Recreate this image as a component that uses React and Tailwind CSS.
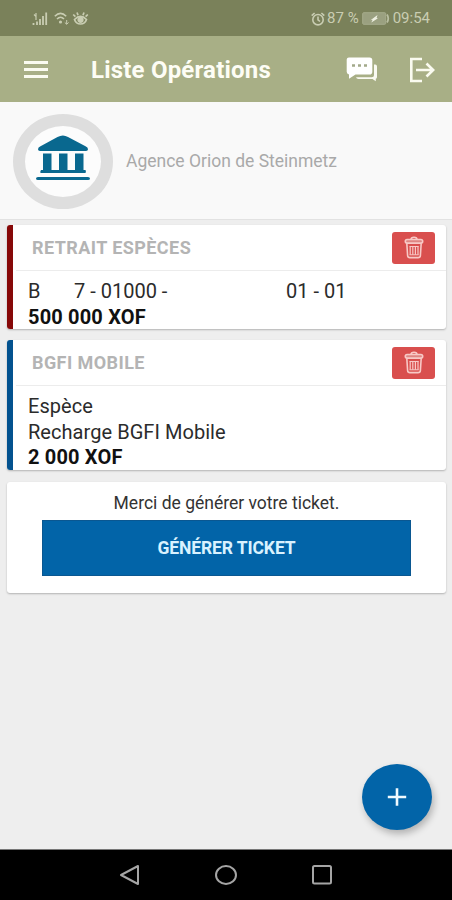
import React, { useState } from 'react';

const initialOperations = [
  {
    id: 1,
    title: 'RETRAIT ESPÈCES',
    stripe: 'bg-[#860808]',
    height: 'h-[104px]',
    account: true,
    lines: [],
    amount: '500 000 XOF',
  },
  {
    id: 2,
    title: 'BGFI MOBILE',
    stripe: 'bg-[#03528f]',
    height: 'h-[130px]',
    account: false,
    lines: ['Espèce', 'Recharge BGFI Mobile'],
    amount: '2 000 XOF',
  },
];

const SignalIcon = () => (
  <svg width="16" height="14" viewBox="0 0 16 14" fill="none" stroke="currentColor" strokeWidth="1.8">
    <path d="M1.5 13v-2M5 13V9.5M8 13V7M11 13V4M14.2 13V0.5" />
    <path d="M2 2.5l2 2M4 1v7" strokeWidth="1.2" />
  </svg>
);

const WifiIcon = () => (
  <svg width="15" height="13" viewBox="0 0 15 13" fill="none" stroke="currentColor" strokeWidth="1.6">
    <path d="M0.8 4.2Q6.5 -1.5 12.2 4.2M3 7Q6.5 3.5 10 7" />
    <circle cx="6.5" cy="10" r="1.6" fill="currentColor" stroke="none" />
    <path d="M12.7 8v4M10.8 10.5l1.9 1.8 1.9-1.8" strokeWidth="1" />
  </svg>
);

const EyeIcon = () => (
  <svg width="17" height="15" viewBox="0 0 17 15" fill="none" stroke="currentColor" strokeWidth="1.7">
    <path d="M2.5 8.5Q8.5 2.5 14.5 8.5Q13 13 8.5 13Q4 13 2.5 8.5zM1.2 3.5l2.2 2.2M5 1.5l1 2.8M12 1.5L11 4.3M15.8 3.5l-2.2 2.2" />
    <circle cx="8.5" cy="8.8" r="2.3" fill="currentColor" />
  </svg>
);

const AlarmIcon = () => (
  <svg width="14" height="14" viewBox="0 0 14 14" fill="none" stroke="currentColor" strokeWidth="1.6">
    <circle cx="7" cy="7.7" r="5.2" />
    <path d="M7 4.6v3.2l2 1.7M0.7 3.6L3.6 1M13.3 3.6L10.4 1" />
  </svg>
);

const BatteryIcon = () => (
  <svg width="28" height="13" viewBox="0 0 28 13" fill="none">
    <rect x="0.7" y="0.7" width="23" height="11.6" rx="1" fill="#9aa080" stroke="#a6ac8c" />
    <path d="M25 2.5Q27.5 6.5 25 10.5" stroke="#b9bfa2" strokeWidth="1.8" />
    <path d="M8.500 8.200L15.500 3L14.600 6L16 6.200L9.300 10.500L10.600 7.800z" fill="#eef0e0" />
  </svg>
);

const ChatIcon = () => (
  <svg width="32" height="25" viewBox="0 0 32 25">
    <path d="M28 7.5h1.2A2 2 0 0 1 31 9.5V20q0 1.5-1.2 1.800V24.300L26.500 22H12.500q-2 0-2.500-1.700H25.500q2.500 0 2.500-2.500z" fill="#fbfbf3" />
    <path d="M3 0.500H23.500a2.800 2.800 0 0 1 2.800 2.800V14.700a2.800 2.800 0 0 1-2.800 2.800H9.500L3 21.800V17.400Q0.700 17 0.700 14.700V3.300A2.600 2.600 0 0 1 3 0.500z" fill="#fff" />
    <path d="M6 7.200h3v2.600h-3zM12 7.200h3v2.600h-3zM18 7.200h3v2.600h-3z" fill="#a3a98a" />
  </svg>
);

const LogoutIcon = () => (
  <svg width="26" height="26" viewBox="0 0 26 26" fill="none" stroke="#fafbf0" strokeWidth="2.600">
    <path d="M13 2H2.300V24H13" />
    <path d="M7 13H24M17.500 6.500L24.200 13L17.500 19.500" />
  </svg>
);

const BankIcon = () => (
  <svg className="mb-[6px]" width="54" height="46" viewBox="0 0 54 46" fill="#09688f">
    <path d="M2 14.200Q2 12 4.500 11.200L21.500 2Q27 -1 32 2L49.500 11.200Q52 12 52 14.200Q52 16 50 16H4Q2 16 2 14.200z" />
    <path d="M7 18.500H15.500V35H7zM23 18.500H31.500V35H23zM39 18.500H47.500V35H39z" />
    <path d="M5 35H49.500Q50.500 38 49 38H5Q3.500 38 5 35zM2 42H52Q54 42 54 43.500Q54 45 52 45H2Q0 45 0 43.500Q0 42 2 42z" />
  </svg>
);

const TrashIcon = () => (
  <svg width="20" height="23" viewBox="0 0 20 23" fill="none" stroke="#f8c9c6" strokeWidth="1.600">
    <path d="M7 3.500Q7 1.200 10 1.200Q13 1.200 13 3.500" />
    <rect x="1.300" y="3.500" width="17.400" height="3.600" rx="1.800" fill="#df8582" />
    <path d="M2.800 7.200L3.600 19.500Q3.700 21.600 6 21.600H14Q16.300 21.600 16.400 19.500L17.200 7.200" />
    <path d="M6.200 10.500V18.800M8.800 10.500V18.800M11.400 10.500V18.800M14 10.500V18.800" strokeWidth="1.200" />
    <path d="M5.500 10.500H14.700M5.500 18.800H14.700" strokeWidth="1" />
  </svg>
);

function OperationCard({ operation, onDelete }) {
  return (
    <div className={`flex overflow-hidden rounded-[3px] bg-white shadow-[0_1px_2px_rgba(0,0,0,0.25)] ${operation.height}`}>
      <div className={`w-[6px] shrink-0 ${operation.stripe}`} />
      <div className="flex-1">
        <div className="ml-[3px] flex h-[46px] items-center justify-between border-b border-[#ececec] pr-[11px] pl-4">
          <h2 className="text-[18px] font-bold tracking-[0.43px] text-[#b4b4b4]">{operation.title}</h2>
          <button
            onClick={() => onDelete(operation.id)}
            className="flex h-8 w-[43px] items-center justify-center rounded-[3px] bg-[#d94f4e]"
          >
            <TrashIcon />
          </button>
        </div>
        <div className="pt-2 pl-[15px] text-[20px] leading-[25.7px] text-[#2b2b2b]">
          {operation.account && (
            <div className="flex whitespace-nowrap">
              <span className="w-[46px]">B</span>
              <span className="w-[212px]">7 - 01000 -</span>
              <span>01 - 01</span>
            </div>
          )}
          {operation.lines.map((line) => (
            <p key={line} className="tracking-[0.05px]">{line}</p>
          ))}
          <p className="font-bold tracking-[0.17px] text-[#111]">{operation.amount}</p>
        </div>
      </div>
    </div>
  );
}

export default function App() {
  const [operations, setOperations] = useState(initialOperations);

  const handleDelete = (id) => {
    setOperations(operations.filter((operation) => operation.id !== id));
  };

  return (
    <div className="relative flex h-[900px] w-[452px] flex-col overflow-hidden bg-[#eeeeee] font-[Roboto,sans-serif]">
      {/* Status bar */}
      <div className="flex h-9 shrink-0 items-center justify-between bg-[#7a815a] pt-px pr-[22px] pl-8 text-[#c9cdb2]">
        <div className="flex items-center gap-[6px]">
          <SignalIcon />
          <div className="flex items-center gap-[3px]">
            <WifiIcon />
            <EyeIcon />
          </div>
        </div>
        <div className="flex items-center text-[15px] whitespace-nowrap">
          <AlarmIcon />
          <span className="mr-[3px] ml-[2px]">87 %</span>
          <BatteryIcon />
          <span className="ml-[3px]">09:54</span>
        </div>
      </div>

      {/* Header */}
      <header className="flex h-[66px] shrink-0 items-center bg-[#a8af86] pt-px pr-[17px] pl-6">
        <button className="flex w-6 flex-col gap-1">
          <span className="h-[3px] w-full bg-[#fafbf0]" />
          <span className="h-[3px] w-full bg-[#fafbf0]" />
          <span className="h-[3px] w-full bg-[#fafbf0]" />
        </button>
        <h1 className="ml-[43px] flex-1 text-[24px] font-bold tracking-[0.2px] whitespace-nowrap text-[#fdfdf5]">
          Liste Opérations
        </h1>
        <button className="mr-[31px]">
          <ChatIcon />
        </button>
        <button>
          <LogoutIcon />
        </button>
      </header>

      {/* Agency */}
      <div className="flex h-[118px] shrink-0 items-center border-b border-[#e2e2e2] bg-[#f9f9f9] pt-px pl-[13px]">
        <div className="flex h-[95px] w-[100px] items-center justify-center rounded-[50%] border-[12px] border-[#dedede] bg-[#fcfcfc]">
          <BankIcon />
        </div>
        <span className="ml-[13px] text-[17.5px] text-[#a9a9a9]">Agence Orion de Steinmetz</span>
      </div>

      {/* Operations */}
      <main className="flex flex-1 flex-col gap-[11px] pt-[5px] pr-[6px] pl-[7px]">
        {operations.map((operation) => (
          <OperationCard key={operation.id} operation={operation} onDelete={handleDelete} />
        ))}
        <div className="mt-px flex h-[111px] flex-col items-center rounded-[3px] bg-white pt-[9px] shadow-[0_1px_2px_rgba(0,0,0,0.25)]">
          <p className="text-[17.5px] leading-6 text-[#333]">Merci de générer votre ticket.</p>
          <button className="mt-[5px] h-14 w-[369px] border border-[#0a5791] bg-[#0264a8] text-[17.5px] font-bold tracking-[-0.1px] text-[#d9f2ff]">
            GÉNÉRER TICKET
          </button>
        </div>
      </main>

      {/* Floating add button */}
      <button className="absolute top-[764px] left-[362px] flex h-[66px] w-[70px] items-center justify-center rounded-[50%] bg-[#0264a8] shadow-[2px_4px_7px_rgba(0,0,0,0.25)]">
        <svg width="20" height="18" viewBox="0 0 20 18" stroke="#f0faff" strokeWidth="2.600">
          <path d="M0.800 9H19.200M10 0.300V17.700" />
        </svg>
      </button>

      {/* Android navigation */}
      <nav className="flex h-[51px] shrink-0 items-center justify-center gap-[74px] border-t border-[#777] bg-black">
        <svg width="22" height="22" viewBox="0 0 22 22" fill="none" stroke="#a5a5a5" strokeWidth="2" strokeLinejoin="round">
          <path d="M2 11L19 2V20z" />
        </svg>
        <svg width="22" height="22" viewBox="0 0 22 22" fill="none" stroke="#a5a5a5" strokeWidth="2">
          <ellipse cx="11" cy="11" rx="10" ry="9" />
        </svg>
        <svg width="22" height="22" viewBox="0 0 22 22" fill="none" stroke="#a5a5a5" strokeWidth="2">
          <rect x="2" y="2" width="18" height="17.500" rx="1.500" />
        </svg>
      </nav>
    </div>
  );
}
